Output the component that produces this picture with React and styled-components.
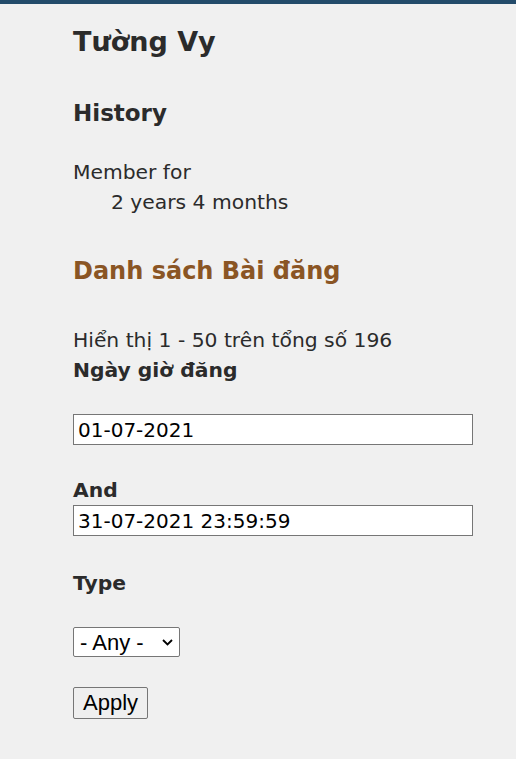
import React from "react";
import styled, { createGlobalStyle } from "styled-components";

const Global = createGlobalStyle`
  html, body {
    margin: 0;
    padding: 0;
    background: #f0f0f0;
  }
  body {
    font-family: "DejaVu Sans", Verdana, sans-serif;
    color: #2b2b2b;
  }
`;

const chevron =
  "data:image/svg+xml;utf8," +
  encodeURIComponent(
    '<svg xmlns="http://www.w3.org/2000/svg" width="11" height="7" viewBox="0 0 11 7"><path d="M1 1l4.5 4.5L10 1" fill="none" stroke="#000" stroke-width="1.8"/></svg>'
  );

const TopBar = styled.div`
  height: 4px;
  background: #234b6a;
`;

const Page = styled.main`
  padding: 0 43px 40px 73px;
  font-size: 20.3px;
  line-height: 30px;
`;

const Title = styled.h1`
  margin: 22px 0 0;
  font-size: 27px;
  line-height: 32px;
  font-weight: bold;
`;

const Section = styled.h2`
  margin: ${(p) => p.$top || 38}px 0 0;
  font-size: ${(p) => p.$size || 23}px;
  line-height: 30px;
  font-weight: bold;
  color: ${(p) => p.$color || "#2b2b2b"};
`;

const List = styled.dl`
  margin: 29px 0 0;
`;

const Term = styled.dt``;

const Desc = styled.dd`
  margin-left: 38px;
`;

const Summary = styled.p`
  margin: 39px 0 0;
`;

const Label = styled.label`
  display: block;
  font-weight: bold;
  margin-top: ${(p) => p.$top || 0}px;
`;

const Field = styled.div`
  display: flex;
  margin-top: ${(p) => p.$top || 0}px;
`;

const TextInput = styled.input`
  box-sizing: border-box;
  width: 400px;
  height: 31px;
  padding: 0 4px;
  border: 1px solid #767676;
  background: #fff;
  font-family: "DejaVu Sans", Verdana, sans-serif;
  font-size: 20px;
  color: #000;
`;

const Select = styled.select`
  box-sizing: border-box;
  appearance: none;
  height: 30px;
  width: 107px;
  padding: 0 0 0 6px;
  border: 1px solid #767676;
  border-radius: 2px;
  background: #fff url("${chevron}") no-repeat right 6px center;
  font-family: "Liberation Sans", Arial, sans-serif;
  font-size: 22px;
  color: #000;
`;

const Button = styled.button`
  box-sizing: border-box;
  height: 32px;
  padding: 0 9px;
  border: 1px solid #767676;
  border-radius: 2px;
  background: #efefef;
  font-family: "Liberation Sans", Arial, sans-serif;
  font-size: 22px;
  color: #000;
`;

const App = () => {
  return (
    <>
      <Global />
      <TopBar />
      <Page>
        <Title>Tường Vy</Title>
        <Section $top={40}>History</Section>
        <List>
          <Term>Member for</Term>
          <Desc>2 years 4 months</Desc>
        </List>
        <Section $top={39} $size={24} $color="#8a5524">
          Danh sách Bài đăng
        </Section>
        <Summary>Hiển thị 1 - 50 trên tổng số 196</Summary>
        <Label>Ngày giờ đăng</Label>
        <Field $top={29}>
          <TextInput defaultValue="01-07-2021" />
        </Field>
        <Label $top={30}>And</Label>
        <Field>
          <TextInput defaultValue="31-07-2021 23:59:59" />
        </Field>
        <Label $top={32}>Type</Label>
        <Field $top={29}>
          <Select defaultValue="all">
            <option value="all">- Any -</option>
          </Select>
        </Field>
        <Field $top={30}>
          <Button>Apply</Button>
        </Field>
      </Page>
    </>
  );
};

export default App;
